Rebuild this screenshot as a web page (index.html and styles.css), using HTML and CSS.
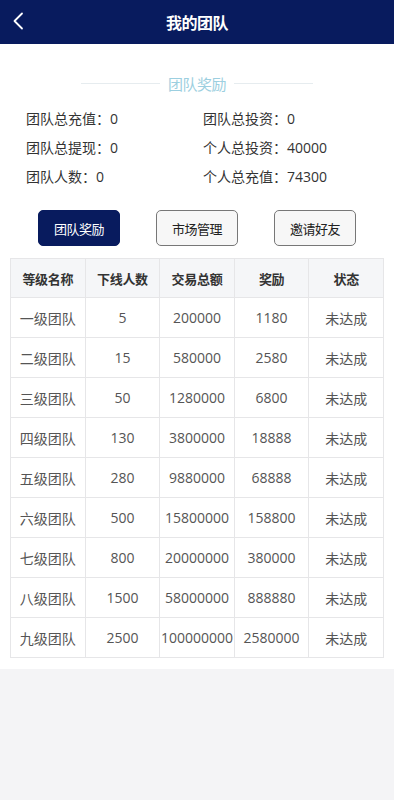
FILE: index.html
```html
<!DOCTYPE html>
<html lang="zh">
<head>
<meta charset="utf-8">
<title>我的团队</title>
<link rel="stylesheet" href="styles.css">
</head>
<body>
<header class="topbar">
  <span class="back"><svg width="12" height="18" viewBox="0 0 12 18"><path d="M10 1.5 L2.5 9 L10 16.5" fill="none" stroke="#fff" stroke-width="1.8" stroke-linecap="round" stroke-linejoin="round"/></svg></span>
  <h1 class="title">我的团队</h1>
</header>
<main class="panel">
  <div class="section-title"><span class="line"></span><span class="label">团队奖励</span><span class="line"></span></div>
  <div class="stats">
    <div>团队总充值：0</div><div>团队总投资：0</div>
    <div>团队总提现：0</div><div>个人总投资：40000</div>
    <div>团队人数：0</div><div>个人总充值：74300</div>
  </div>
  <div class="tabs">
    <button class="tab active">团队奖励</button>
    <button class="tab">市场管理</button>
    <button class="tab">邀请好友</button>
  </div>
  <table class="grid">
    <thead><tr><th>等级名称</th><th>下线人数</th><th>交易总额</th><th>奖励</th><th>状态</th></tr></thead>
    <tbody>
      <tr><td>一级团队</td><td>5</td><td>200000</td><td>1180</td><td>未达成</td></tr>
      <tr><td>二级团队</td><td>15</td><td>580000</td><td>2580</td><td>未达成</td></tr>
      <tr><td>三级团队</td><td>50</td><td>1280000</td><td>6800</td><td>未达成</td></tr>
      <tr><td>四级团队</td><td>130</td><td>3800000</td><td>18888</td><td>未达成</td></tr>
      <tr><td>五级团队</td><td>280</td><td>9880000</td><td>68888</td><td>未达成</td></tr>
      <tr><td>六级团队</td><td>500</td><td>15800000</td><td>158800</td><td>未达成</td></tr>
      <tr><td>七级团队</td><td>800</td><td>20000000</td><td>380000</td><td>未达成</td></tr>
      <tr><td>八级团队</td><td>1500</td><td>58000000</td><td>888880</td><td>未达成</td></tr>
      <tr><td>九级团队</td><td>2500</td><td>100000000</td><td>2580000</td><td>未达成</td></tr>
    </tbody>
  </table>
</main>
</body>
</html>
```
FILE: styles.css
```css
* { box-sizing: border-box; }
html, body { margin: 0; padding: 0; }
body {
  background: #f4f4f6;
  font-family: "Open Sans", "Noto Sans CJK SC", sans-serif;
  color: #333;
  min-height: 800px;
}
.topbar {
  height: 44px;
  background: #081b5e;
  display: flex;
  align-items: center;
  justify-content: center;
  position: relative;
}
.back {
  position: absolute;
  left: 12px;
  top: 12px;
  display: flex;
}
.title {
  margin: 0;
  color: #fff;
  font-size: 16px;
  font-weight: 700;
  letter-spacing: -0.5px;
}
.panel {
  background: #fff;
  padding: 26px 10px 11px;
}
.section-title {
  display: flex;
  align-items: center;
  justify-content: center;
  gap: 8px;
  height: 26px;
}
.section-title .line {
  width: 79px;
  height: 1px;
  background: #e6ecef;
}
.section-title .label {
  color: #9ccfe0;
  font-size: 15px;
  letter-spacing: -0.5px;
}
.stats {
  display: grid;
  grid-template-columns: 177px 1fr;
  padding: 13px 0 0 16px;
  font-size: 14px;
  color: #333;
}
.stats div { height: 29px; line-height: 20px; }
.tabs {
  display: flex;
  gap: 36px;
  padding: 14px 0 0 28px;
  margin-bottom: 12px;
}
.tab {
  width: 82px;
  height: 36px;
  border: 1px solid #777;
  border-radius: 5px;
  background: #f7f7f7;
  font-family: inherit;
  font-size: 13px;
  color: #222;
  letter-spacing: -0.5px;
  padding: 0;
}
.tab.active {
  background: #081b5e;
  border-color: #081b5e;
  color: #fff;
}
.grid {
  width: 374px;
  border-collapse: collapse;
  table-layout: fixed;
  font-size: 14px;
}
.grid th, .grid td {
  border: 1px solid #e6e6e8;
  text-align: center;
  padding: 0;
  white-space: nowrap;
  overflow: visible;
}
.grid th {
  height: 39px;
  background: #f5f6f8;
  font-size: 13px;
  font-weight: 700;
  color: #333;
  letter-spacing: -0.3px;
}
.grid td {
  height: 40px;
  color: #555;
}
```
